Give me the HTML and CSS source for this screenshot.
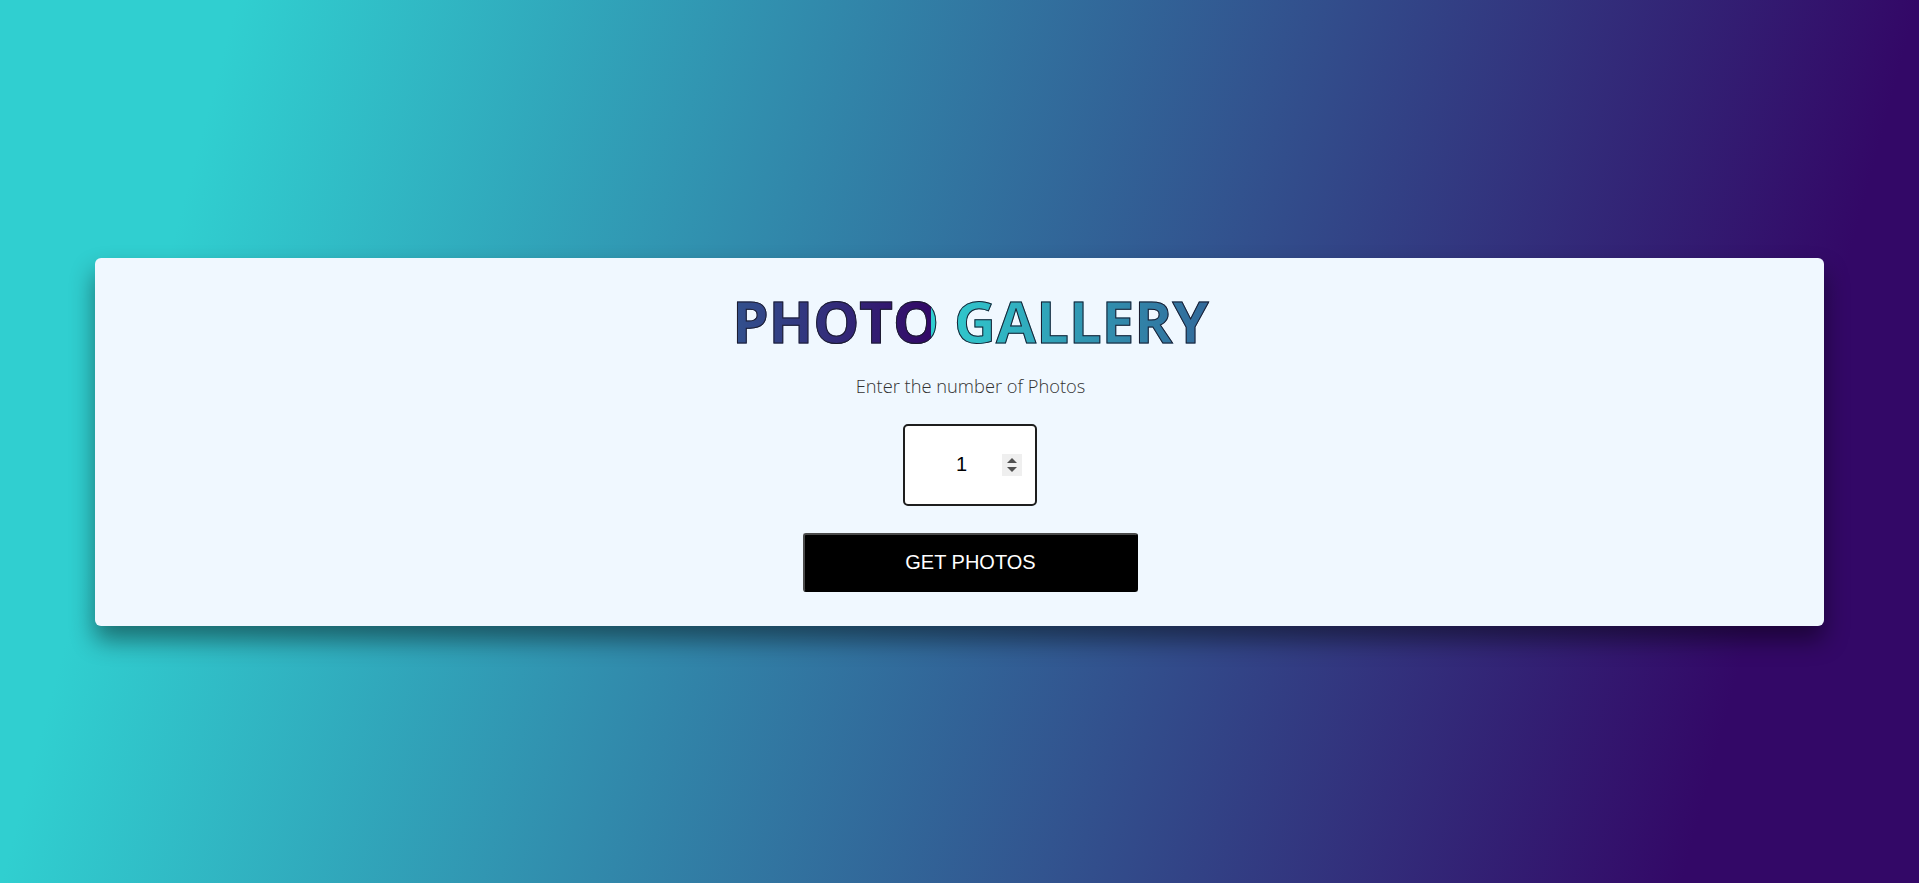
FILE: index.html
```html
<!DOCTYPE html>
<html lang="en">
<head>
<meta charset="utf-8">
<title>Photo Gallery</title>
<link rel="stylesheet" href="styles.css">
</head>
<body>
  <main class="card">
    <div class="content">
      <h1 class="title"><span class="title-text">PHOTO GALLERY</span></h1>
      <p class="prompt">Enter the number of Photos</p>
      <div class="count-wrap">
        <input class="count" type="number" value="1" min="1">
        <span class="spinner" aria-hidden="true">
          <svg width="20" height="22" viewBox="0 0 20 22">
            <rect width="20" height="22" fill="#efefef"/>
            <path d="M5 9 L10 4 L15 9 Z" fill="#505050"/>
            <path d="M5 13 L15 13 L10 18 Z" fill="#505050"/>
          </svg>
        </span>
      </div>
      <button class="get-btn" type="button">GET PHOTOS</button>
    </div>
  </main>
</body>
</html>
```

FILE: styles.css
```css
* {
  box-sizing: border-box;
}

html, body {
  height: 100%;
}

body {
  margin: 0;
  display: flex;
  align-items: center;
  justify-content: center;
  background: linear-gradient(105deg, #30cfd0 11%, #330867 89%);
  font-family: "Open Sans", "Liberation Sans", sans-serif;
}

.card {
  width: 90.1%;
  background: #f0f8ff;
  border-radius: 6px;
  box-shadow: 0 14px 24px rgba(0, 0, 0, 0.45);
  padding: 27px 0 34px 22px;
}

.content {
  display: flex;
  flex-direction: column;
  align-items: center;
}

.title {
  margin: 0;
  font-size: 58px;
  line-height: 71px;
  font-weight: 700;
  font-family: "Open Sans", "Liberation Sans", sans-serif;
}

.title-text {
  display: inline-block;
  background-image: linear-gradient(to right, #30cfd0, #330867);
  background-size: 540px 100%;
  background-repeat: repeat-x;
  background-position: 199px 0;
  -webkit-background-clip: text;
  background-clip: text;
  color: transparent;
  -webkit-text-stroke: 1px #1c1c2e;
}

.prompt {
  margin: 18px 0 0;
  font-size: 18.3px;
  line-height: 24px;
  font-weight: 300;
  color: #333;
}

.count-wrap {
  position: relative;
  margin-top: 26px;
  width: 134px;
  height: 82px;
}

.count {
  width: 100%;
  height: 100%;
  border: 2px solid #1e1e1e;
  border-radius: 5px;
  background: #fff;
  font-family: "Liberation Sans", Arial, sans-serif;
  font-size: 20px;
  text-align: center;
  padding: 0 30px 0 12px;
  color: #000;
  -moz-appearance: textfield;
}

.count::-webkit-inner-spin-button,
.count::-webkit-outer-spin-button {
  -webkit-appearance: none;
  margin: 0;
}

.spinner {
  position: absolute;
  left: 99px;
  top: 30px;
  width: 20px;
  height: 22px;
  pointer-events: none;
}

.spinner svg {
  display: block;
}

.get-btn {
  margin-top: 27px;
  width: 335px;
  height: 59px;
  background: #000;
  color: #fff;
  font-family: "Liberation Sans", Arial, sans-serif;
  font-size: 20px;
  border: 2px solid #000;
  border-top-color: #4a4a4a;
  border-left-color: #4a4a4a;
  border-radius: 3px;
  cursor: pointer;
}
```
